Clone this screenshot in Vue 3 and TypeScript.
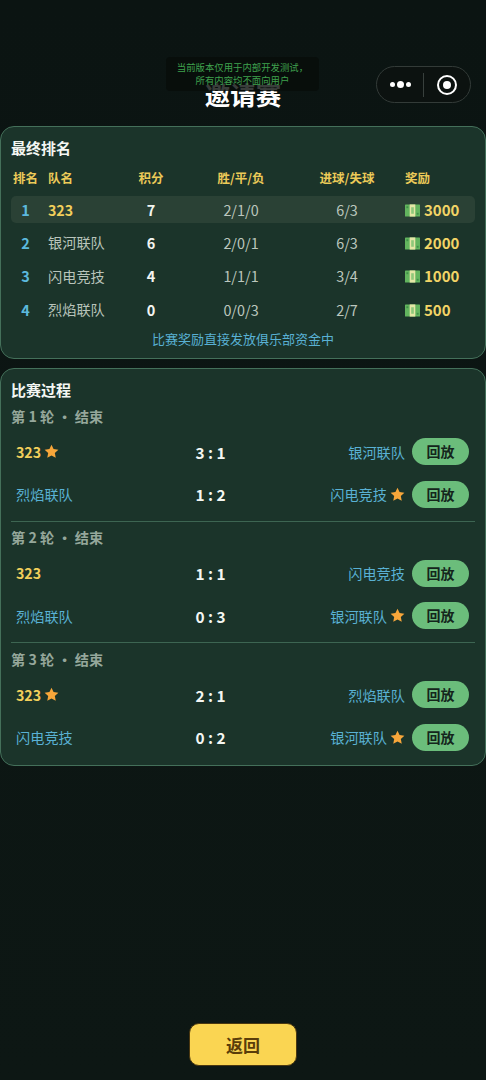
<script setup lang="ts">
interface Rank { pos: number; name: string; pts: number; wdl: string; goals: string; prize: number }
interface Match { home: string; hs: number; as: number; away: string }
interface Round { no: number; matches: Match[] }

const ranks: Rank[] = [
  { pos: 1, name: '323', pts: 7, wdl: '2/1/0', goals: '6/3', prize: 3000 },
  { pos: 2, name: '银河联队', pts: 6, wdl: '2/0/1', goals: '6/3', prize: 2000 },
  { pos: 3, name: '闪电竞技', pts: 4, wdl: '1/1/1', goals: '3/4', prize: 1000 },
  { pos: 4, name: '烈焰联队', pts: 0, wdl: '0/0/3', goals: '2/7', prize: 500 },
]
const rounds: Round[] = [
  { no: 1, matches: [
    { home: '323', hs: 3, as: 1, away: '银河联队' },
    { home: '烈焰联队', hs: 1, as: 2, away: '闪电竞技' },
  ] },
  { no: 2, matches: [
    { home: '323', hs: 1, as: 1, away: '闪电竞技' },
    { home: '烈焰联队', hs: 0, as: 3, away: '银河联队' },
  ] },
  { no: 3, matches: [
    { home: '323', hs: 2, as: 1, away: '烈焰联队' },
    { home: '闪电竞技', hs: 0, as: 2, away: '银河联队' },
  ] },
]
</script>

<template>
  <div class="page">
    <header class="head">
      <h1 class="title">邀请赛</h1>
      <div class="notice">当前版本仅用于内部开发测试，<br />所有内容均不面向用户</div>
      <div class="capsule">
        <span class="dots"><i></i><i class="mid"></i><i></i></span>
        <span class="sep"></span>
        <span class="target"><i></i></span>
      </div>
    </header>

    <section class="card rank-card">
      <h2 class="card-title">最终排名</h2>
      <div class="grid grid-head">
        <span>排名</span><span>队名</span><span class="c">积分</span><span class="c">胜/平/负</span><span class="c">进球/失球</span><span>奖励</span>
      </div>
      <div v-for="r in ranks" :key="r.pos" class="grid grid-row" :class="{ first: r.pos === 1 }">
        <span class="pos">{{ r.pos }}</span>
        <span class="name" :class="{ me: r.name === '323' }">{{ r.name }}</span>
        <span class="c pts">{{ r.pts }}</span>
        <span class="c stat">{{ r.wdl }}</span>
        <span class="c stat">{{ r.goals }}</span>
        <span class="prize">
          <svg class="cash" viewBox="0 0 16 13" width="15" height="13">
            <rect x="0" y="0" width="16" height="13" rx="0.5" fill="#62b45e" />
            <rect x="5" y="0" width="6" height="13" fill="#e4e6a6" />
            <rect x="6.6" y="3" width="2.8" height="7" fill="#8ec87a" />
            <rect x="1.5" y="2" width="2" height="2" fill="#3f8f48" />
            <rect x="12.5" y="9" width="2" height="2" fill="#3f8f48" />
          </svg>
          {{ r.prize }}
        </span>
      </div>
      <p class="tip">比赛奖励直接发放俱乐部资金中</p>
    </section>

    <section class="card match-card">
      <h2 class="card-title">比赛过程</h2>
      <div v-for="rd in rounds" :key="rd.no" class="round">
        <div class="round-label">第 {{ rd.no }} 轮 · 结束</div>
        <div v-for="m in rd.matches" :key="m.home" class="match">
          <div class="teams">
            <span class="team" :class="{ me: m.home === '323' }">
              <span>{{ m.home }}</span>
              <svg v-if="m.hs > m.as" class="star" viewBox="0 0 24 24" width="15" height="15"><path d="M12 1l3.3 7.100 7.700.9-5.700 5.300 1.500 7.700L12 18.200 5.200 22l1.500-7.700L1 9l7.700-.9z" /></svg>
            </span>
            <span class="score">{{ m.hs }} : {{ m.as }}</span>
            <span class="team right">
              <span>{{ m.away }}</span>
              <svg v-if="m.as > m.hs" class="star" viewBox="0 0 24 24" width="15" height="15"><path d="M12 1l3.300 7.100 7.700.9-5.700 5.300 1.500 7.700L12 18.200 5.200 22l1.500-7.700L1 9l7.700-.9z" /></svg>
            </span>
          </div>
          <button class="replay" type="button">回放</button>
        </div>
      </div>
    </section>

    <footer class="foot">
      <button class="back" type="button">返回</button>
    </footer>
  </div>
</template>

<style scoped>
.page {
  position: relative;
  box-sizing: border-box;
  width: 486px;
  height: 1080px;
  display: flex;
  flex-direction: column;
  background: linear-gradient(180deg, #0b1412 0%, #0d1714 100%);
  font-family: "Noto Sans CJK SC", "Noto Sans", sans-serif;
  color: #fff;
  overflow: hidden;
}
.head {
  height: 126px;
  flex: none;
}
.title {
  margin: 0;
  padding-top: 76px;
  text-align: center;
  font-size: 25.5px;
  line-height: 36px;
  font-weight: 700;
  color: #fff;
}
.notice {
  position: absolute;
  left: 166px;
  top: 57px;
  width: 153px;
  height: 34px;
  box-sizing: border-box;
  padding-top: 4px;
  border-radius: 4px;
  background: rgba(8, 12, 10, 0.8);
  color: #3fa14e;
  font-size: 9.4px;
  line-height: 12.5px;
  text-align: center;
}
.capsule {
  position: absolute;
  left: 376px;
  top: 66px;
  width: 95px;
  height: 37px;
  box-sizing: border-box;
  display: flex;
  align-items: center;
  border: 1.5px solid #333b38;
  border-radius: 19px;
  background: #0c1210;
}
.dots {
  width: 46px;
  display: flex;
  align-items: center;
  justify-content: center;
  gap: 2px;
}
.dots i {
  width: 5px;
  height: 5px;
  border-radius: 50%;
  background: #fff;
}
.dots i.mid {
  width: 7px;
  height: 7px;
}
.sep {
  width: 1px;
  height: 24px;
  background: #38403d;
}
.target {
  flex: 1;
  display: flex;
  align-items: center;
  justify-content: center;
}
.target i {
  box-sizing: border-box;
  width: 20px;
  height: 20px;
  border: 2.5px solid #fff;
  border-radius: 50%;
  display: flex;
  align-items: center;
  justify-content: center;
}
.target i::after {
  content: "";
  width: 8px;
  height: 8px;
  border-radius: 50%;
  background: #fff;
}
.card {
  box-sizing: border-box;
  width: 486px;
  flex: none;
  border: 1px solid #44705a;
  border-radius: 14px;
  background: #1b342a;
}
.rank-card {
  height: 233px;
  padding: 0 10px;
}
.match-card {
  height: 398px;
  margin-top: 9px;
  padding: 0 10px;
}
.card-title {
  margin: 0;
  padding-top: 11px;
  font-size: 15px;
  line-height: 20px;
  font-weight: 700;
  color: #f4f7f3;
}
.grid {
  display: grid;
  grid-template-columns: 35px 77px 52px 128px 84px 1fr;
  align-items: center;
  width: 464px;
  box-sizing: border-box;
  padding-left: 2px;
}
.grid-head {
  height: 31px;
  margin-top: 4px;
  font-size: 12.5px;
  font-weight: 700;
  color: #ecca58;
}
.grid-head > :last-child {
  padding-left: 16px;
}
.grid-row {
  height: 33.4px;
}
.grid-row.first {
  border-radius: 5px;
  background: #2a4135;
  height: 27px;
  margin: 3px 0 2.6px;
}
.c {
  text-align: center;
}
.pos {
  width: 25px;
  text-align: center;
  font-size: 14.5px;
  font-weight: 700;
  color: #5cb9dd;
}
.name {
  font-size: 14.2px;
  color: #b9c4bb;
}
.name.me {
  color: #f2cf5b;
  font-weight: 700;
}
.pts {
  font-size: 14.5px;
  font-weight: 700;
  color: #f3f5f1;
}
.stat {
  font-size: 14.4px;
  color: #bcc7be;
}
.prize {
  display: flex;
  align-items: center;
  gap: 4px;
  padding-left: 16px;
  font-size: 15px;
  font-weight: 700;
  color: #f2d566;
}
.cash {
  flex: none;
  margin-top: 2px;
}
.tip {
  margin: 3px 0 0;
  text-align: center;
  font-size: 13px;
  line-height: 20px;
  color: #59b1d4;
}
.round {
  height: 121.5px;
  box-sizing: border-box;
  border-bottom: 1px solid #3d6552;
}
.round:last-child {
  border-bottom: none;
}
.round-label {
  height: 26px;
  padding-top: 4.5px;
  font-size: 14.2px;
  line-height: 23px;
  font-weight: 700;
  color: #95a79b;
}
.match {
  display: flex;
  align-items: center;
  height: 42.5px;
  padding: 0 6px 0 5px;
}
.teams {
  flex: 1;
  display: grid;
  grid-template-columns: 1fr auto 1fr;
  align-items: center;
}
.team {
  display: flex;
  align-items: center;
  gap: 3px;
  font-size: 14.2px;
  line-height: 20px;
  color: #59b1d4;
}
.team.me {
  color: #f2cf5b;
  font-weight: 700;
}
.team.right {
  justify-content: flex-end;
}
.star path {
  fill: #f7a63a;
}
.score {
  font-size: 15.4px;
  line-height: 20px;
  font-weight: 700;
  color: #f4f7f3;
  white-space: pre;
}
.replay {
  width: 57px;
  height: 27px;
  margin-left: 7px;
  padding: 0;
  border: none;
  border-radius: 14px;
  background: #6bbd7b;
  color: #14251c;
  font-family: inherit;
  font-size: 14px;
  font-weight: 700;
  line-height: 27px;
}
.foot {
  margin-top: auto;
  padding-bottom: 14px;
  display: flex;
  justify-content: center;
}
.back {
  width: 108px;
  height: 43px;
  padding: 0;
  border: 1px solid #4a3710;
  border-radius: 10px;
  background: #fad552;
  color: #5a3d0a;
  font-family: inherit;
  font-size: 17px;
  font-weight: 700;
}
</style>

<style>
html, body { margin: 0; background: #0c1512; }
</style>
